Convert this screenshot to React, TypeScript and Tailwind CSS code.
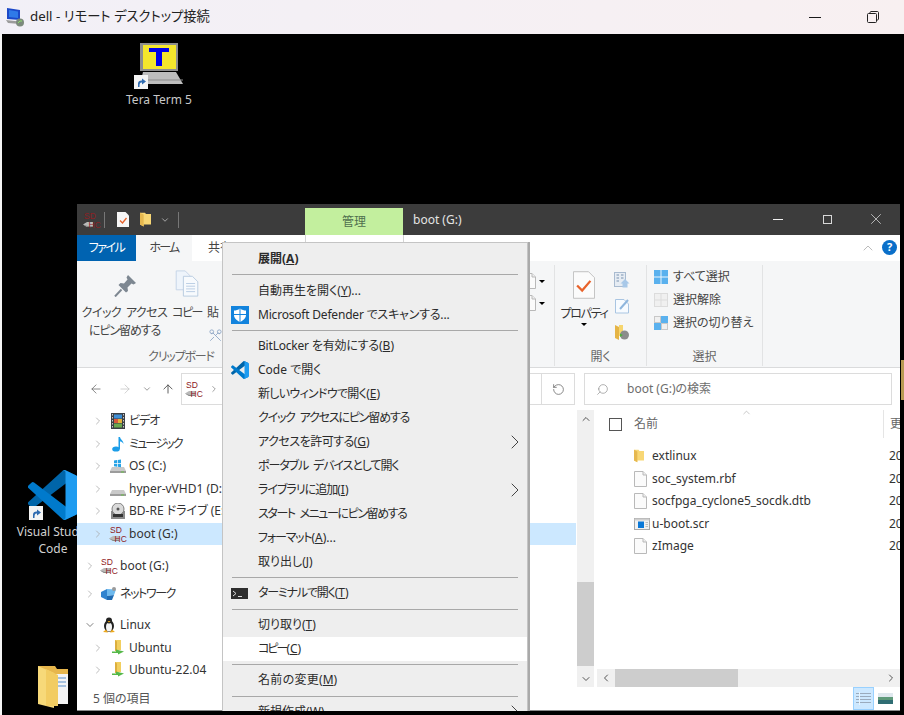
import React from "react";
import { ArrowLeft, ArrowRight, ArrowUp, ChevronDown, ChevronLeft, ChevronRight, ChevronUp, RotateCw, Scissors, Search, X } from "lucide-react";

function VsCodeLogo({ className }: { className: string }) {
  return (
    <svg viewBox="0 0 100 100" className={className}>
      <path fill="#0065A9" d="M96.46 10.8 75.86.87a6.23 6.23 0 0 0-7.1 1.2L1.32 63.56a4.16 4.16 0 0 0 0 6.16l5.51 5.01a4.16 4.16 0 0 0 5.32.24L93.4 13.28c2.73-2.07 6.65-.12 6.65 3.3v-.24a6.25 6.25 0 0 0-3.59-5.54Z" />
      <path fill="#007ACC" d="M96.46 89.2l-20.6 9.92a6.23 6.23 0 0 1-7.1-1.2L1.32 36.44a4.16 4.16 0 0 1 0-6.16l5.51-5.01a4.16 4.16 0 0 1 5.32-.24l81.25 61.68c2.73 2.07 6.65.12 6.65-3.3v.24a6.25 6.25 0 0 1-3.59 5.55Z" />
      <path fill="#1F9CF0" d="M75.86 99.13a6.23 6.23 0 0 1-7.1-1.2c2.3 2.3 6.24.67 6.24-2.58V4.65c0-3.25-3.94-4.88-6.24-2.58a6.23 6.23 0 0 1 7.1-1.2l20.6 9.91A6.25 6.25 0 0 1 100 16.33v67.34a6.25 6.25 0 0 1-3.54 5.63l-20.6 9.83Z" />
    </svg>
  );
}

function ShortcutBadge({ className }: { className: string }) {
  return (
    <svg viewBox="0 0 14 14" className={className}>
      <rect width="14" height="14" fill="#f4f4f4" />
      <path d="M4 12V8.5C4 6.5 5.5 5.5 7.5 5.5H8V3.5L12 6.5 8 9.5V7.5H7.5C6 7.5 5.5 8.5 5.5 12Z" fill="#2f6bb0" />
    </svg>
  );
}

function SdIcon({ className }: { className: string }) {
  return (
    <svg viewBox="0 0 18 18" className={className}>
      <path d="M0 13.5 4 11H10V16H4Z" fill="#b9b9b9" />
      <path d="M0 13.5 4 16H10V15H4.5Z" fill="#888" />
      <text x="1" y="8" fontSize="8.5" fontFamily="Liberation Sans" fill="#8e2024">SD</text>
      <text x="5.5" y="16.5" fontSize="8.5" fontFamily="Liberation Sans" fill="#8e2024">HC</text>
    </svg>
  );
}

function FolderIcon({ className }: { className: string }) {
  return (
    <svg viewBox="0 0 12 15" className={className}>
      <path d="M0 0H5.5L6.5 1.5H12V13H4V15L0 13Z" fill="#f8d775" />
      <path d="M0 0 4 2V15L0 13Z" fill="#e6b84f" />
    </svg>
  );
}

function FileIcon() {
  return (
    <svg viewBox="0 0 13 16" className="h-4 w-[13px]">
      <path d="M.5.5H9L12.5 4V15.5H.5Z" fill="#fbfbfb" stroke="#b9b9b9" />
      <path d="M9 .5V4H12.5" fill="#eee" stroke="#b9b9b9" />
    </svg>
  );
}

function ScrIcon() {
  return (
    <svg viewBox="0 0 16 12" className="h-3 w-4">
      <rect x=".5" y=".5" width="15" height="11" fill="#f1f1f1" stroke="#a8a8a8" />
      <rect x=".5" y=".5" width="15" height="2" fill="#cfcfcf" />
      <rect x="4" y="3.5" width="6" height="6.5" fill="#0a78d7" />
      <path d="M11.5 4.5H14M11.5 6.5H14M11.5 8.5H14" stroke="#bdbdbd" />
    </svg>
  );
}

function NavIcon({ kind }: { kind: string }) {
  if (kind === "video")
    return (
      <svg viewBox="0 0 14 16" className="h-4 w-[14px]">
        <rect width="14" height="16" fill="#3b3f45" />
        <rect x="3" y="1.5" width="8" height="4" fill="#3f8fd6" />
        <rect x="3" y="6" width="4" height="4" fill="#d8573c" />
        <rect x="7" y="6" width="4" height="4" fill="#e3b23c" />
        <rect x="3" y="10.5" width="8" height="4" fill="#6aa84f" />
        <path d="M1.5 1v14M12.5 1v14" stroke="#c9c9c9" strokeDasharray="1.5 1.5" />
      </svg>
    );
  if (kind === "music")
    return (
      <svg viewBox="0 0 14 16" className="h-4 w-[14px]">
        <ellipse cx="5" cy="13" rx="3.8" ry="2.6" fill="#1b9de8" />
        <path d="M7.5 13V1H9C9.5 4 12.5 4.5 12.5 8 11.5 6 10 5.5 9 5.5V13Z" fill="#1b9de8" />
      </svg>
    );
  if (kind === "os" || kind === "hdd")
    return (
      <svg viewBox="0 0 16 14" className="h-[14px] w-4">
        <path d="M2 8H14L16 12V14H0V12Z" fill="#c9c9c9" />
        <rect y="12" width="16" height="2" fill="#9c9c9c" />
        <rect x="11" y="12.5" width="3" height="1" fill="#6cc04a" />
        {kind === "os" && <path d="M4 1.5 7 1V4H4ZM7.7.9 11 .4V4H7.7ZM4 4.7H7V7.7L4 7.2ZM7.7 4.7H11V8.2L7.7 7.8Z" fill="#27a3e6" />}
      </svg>
    );
  if (kind === "bd")
    return (
      <svg viewBox="0 0 16 16" className="h-4 w-4">
        <rect x="1" y="8" width="14" height="8" fill="#8a8a8a" />
        <circle cx="8" cy="6" r="6" fill="#d9d9d9" stroke="#7d7d7d" />
        <circle cx="8" cy="6" r="1.5" fill="#555" />
        <rect x="3" y="11" width="10" height="3" fill="#333" />
      </svg>
    );
  if (kind === "net")
    return (
      <svg viewBox="0 0 16 16" className="h-4 w-4">
        <path d="M0 6 6 3V14L0 11Z" fill="#2f83cf" />
        <path d="M6 3 15 3.5 13 9 6 10Z" fill="#6db9ee" />
        <path d="M6 10 13 9 11 14H6Z" fill="#1f6bb3" />
        <circle cx="13" cy="3" r="2" fill="#9a9a9a" />
      </svg>
    );
  if (kind === "linux")
    return (
      <svg viewBox="0 0 14 16" className="h-4 w-[14px]">
        <ellipse cx="7" cy="9" rx="5" ry="6" fill="#222" />
        <ellipse cx="7" cy="10" rx="3" ry="4.5" fill="#f5f5f5" />
        <circle cx="7" cy="3.5" r="3" fill="#222" />
        <path d="M5.5 4H8.5L7 5.5Z" fill="#eea91c" />
        <path d="M1 15 4 12.5 6 15.5ZM13 15 10 12.5 8 15.5Z" fill="#eea91c" />
      </svg>
    );
  return (
    <svg viewBox="0 0 14 16" className="h-4 w-[14px]">
      <path d="M4 0H10V10H4Z" fill="#f2cf5f" />
      <path d="M4 0 6 1.5V11H4Z" fill="#dcae3e" />
      <path d="M1 11.5H5V9.5L13 11.5 7 14.5V13H1Z" fill="#55b848" />
    </svg>
  );
}

function Acc({ k }: { k: string }) {
  return (
    <span>
      (<span className="underline">{k}</span>)
    </span>
  );
}

const navRows = [
  { label: "ビデオ", icon: "video", d: 1, track: "tracking-[-1px]" },
  { label: "ミュージック", icon: "music", d: 1, track: "tracking-[-1.8px]" },
  { label: "OS (C:)", icon: "os", d: 1 },
  { label: "hyper-vVHD1 (D:)", icon: "hdd", d: 1 },
  { label: "BD-RE ドライブ (E:)", icon: "bd", d: 1 },
  { label: "boot (G:)", icon: "sd", d: 1, selected: true },
];

function NavRow({ label, icon, d, selected, open, cls, track }: { label: string; icon: string; d: number; selected?: boolean; open?: boolean; cls?: string; track?: string }) {
  return (
    <div className={`flex h-[22.5px] shrink-0 items-center ${selected ? "bg-[#cce8ff]" : ""} ${cls ?? ""}`}>
      <span className={d ? "ml-[15px] w-[17px]" : "ml-[7px] w-[16px]"}>
        {open ? <ChevronDown size={12} strokeWidth={1.5} className="text-[#555]" /> : <ChevronRight size={12} strokeWidth={1.5} className="text-[#a6a6a6]" />}
      </span>
      <span className="flex w-[18px] justify-center">
        {icon === "sd" ? <SdIcon className="h-[18px] w-[18px]" /> : <NavIcon kind={icon} />}
      </span>
      <span className={`ml-[2px] whitespace-nowrap ${track ?? ""}`}>{label}</span>
    </div>
  );
}

function MenuRow({ label, k, tail, icon, arrow, bold, hi, track }: { label: string; k?: string; tail?: string; icon?: React.ReactNode; arrow?: boolean; bold?: boolean; hi?: boolean; track?: string }) {
  return (
    <div className={`flex h-6 items-center overflow-hidden ${hi ? "bg-white" : ""} ${bold ? "font-bold" : ""}`}>
      <span className="ml-[8px] flex w-[27px] items-center">{icon}</span>
      <span className="flex-1 whitespace-nowrap">
        <span className={track ?? ""}>{label}</span>
        {k && <Acc k={k} />}
        {tail}
      </span>
      {arrow && <ChevronRight size={24} strokeWidth={1} className="text-[#444]" />}
    </div>
  );
}

function MenuSep({ h, pt }: { h: string; pt: string }) {
  return (
    <div className={`${h} ${pt} ml-[9px] mr-[9px]`}>
      <div className="h-px bg-[#a8a8a8]" />
    </div>
  );
}

function ContextMenu() {
  return (
    <div className="absolute left-[145px] top-[38px] h-[480px] w-[306px] border border-b-0 border-[#c4c4c4] bg-[#eeeeee] pt-[4px] text-[12px] text-[#2b2b2b] shadow-[2px_0_0_#a9a9a9]">
      <MenuRow label="展開" k="A" bold />
      <MenuSep h="h-[8px]" pt="pt-[3px]" />
      <MenuRow label="自動再生を開く" k="Y" tail="..." />
      <MenuRow
        label="Microsoft Defender でスキャンする..."
        track="tracking-[-0.2px]"
        icon={
          <svg viewBox="0 0 18 18" className="h-[18px] w-[18px]">
            <rect width="18" height="18" fill="#1283dd" />
            <path d="M9 2.5C11 4 13 4.5 15 4.5V9C15 12.5 12 14.5 9 16 6 14.5 3 12.5 3 9V4.5C5 4.5 7 4 9 2.5Z" fill="#fff" />
            <path d="M9 2.5V16M3 8.5H15" stroke="#1283dd" />
          </svg>
        }
      />
      <MenuSep h="h-[7px]" pt="pt-[3px]" />
      <MenuRow label="BitLocker を有効にする" k="B" track="tracking-[-0.2px]" />
      <MenuRow label="Code で開く" icon={<VsCodeLogo className="h-[18px] w-[18px]" />} />
      <MenuRow label="新しいウィンドウで開く" k="E" track="tracking-[-0.7px]" />
      <MenuRow label="クイック アクセスにピン留めする" track="tracking-[-1.2px] [word-spacing:3px]" />
      <MenuRow label="アクセスを許可する" k="G" arrow track="tracking-[-0.5px]" />
      <MenuRow label="ポータブル デバイスとして開く" track="tracking-[-1.1px] [word-spacing:3px]" />
      <MenuRow label="ライブラリに追加" k="I" arrow track="tracking-[-1px]" />
      <MenuRow label="スタート メニューにピン留めする" track="tracking-[-1.4px] [word-spacing:3px]" />
      <MenuRow label="フォーマット" k="A" tail="..." track="tracking-[-1.2px]" />
      <MenuRow label="取り出し" k="J" />
      <MenuSep h="h-[7px]" pt="pt-[3px]" />
      <MenuRow
        label="ターミナルで開く"
        k="T"
        track="tracking-[-1.2px]"
        icon={
          <svg viewBox="0 0 17 11" className="h-[11px] w-[17px]">
            <rect width="17" height="11" fill="#2e2e2e" />
            <path d="M2 3 5 5.5 2 8" stroke="#ddd" fill="none" />
            <path d="M7 8.5H11" stroke="#ddd" />
          </svg>
        }
      />
      <MenuSep h="h-[8px]" pt="pt-[4px]" />
      <MenuRow label="切り取り" k="T" />
      <MenuRow label="コピー" k="C" hi track="tracking-[-2px]" />
      <MenuSep h="h-[7px]" pt="pt-[3px]" />
      <MenuRow label="名前の変更" k="M" track="tracking-[0.3px]" />
      <MenuSep h="h-[8px]" pt="pt-[4px]" />
      <MenuRow label="新規作成" k="W" arrow />
    </div>
  );
}

function TitleBarDoc() {
  return (
    <svg viewBox="0 0 12 15" className="h-[15px] w-3">
      <path d="M0 0H8.5L12 3.5V15H0Z" fill="#f6f6f6" />
      <path d="M3 8.5 5.5 11 9.5 6" stroke="#e8622a" strokeWidth="1.3" fill="none" />
    </svg>
  );
}

function Ribbon() {
  return (
    <div className="flex h-[107px] border-b border-[#dadbdc] bg-[#f5f6f7] text-[12px] text-[#444]">
      {/* clipboard + hidden groups */}
      <div className="mb-px mt-[4px] flex w-[478px] border-r border-[#e2e3e4]">
        <div className="flex w-[208px] flex-col">
          <div className="flex h-[83px] shrink-0">
            <div className="ml-[7px] flex w-[81px] flex-col items-center text-center leading-[18px]">
              <svg viewBox="0 0 22 22" className="mt-[10px] h-[22px] w-[22px]">
                <path d="M14 0 22 8 19.5 9.5 17.5 8.5 13.5 12.5 14 16 12 17.5 4.5 10 6.5 8 10 8.5 13.5 4.5 12.5 2.5Z" fill="#7d8791" />
                <path d="M7.5 14.5 1 21.5" stroke="#7d8791" strokeWidth="2" />
              </svg>
              <span className="mt-[7px] whitespace-nowrap tracking-[-0.5px] [word-spacing:2px]">クイック アクセス</span>
              <span className="whitespace-nowrap tracking-[-1.1px]">にピン留めする</span>
            </div>
            <div className="ml-[3px] flex w-[38px] flex-col items-center leading-[18px]">
              <svg viewBox="0 0 26 30" className="mt-[5px] h-[27px] w-[24px]">
                <path d="M1 1H11L16 6V22H1Z" fill="#eef4fb" stroke="#c2d3e6" />
                <path d="M9 7H19L25 13V29H9Z" fill="#f7fafd" stroke="#b5c9df" />
                <path d="M12 15H22M12 18H22M12 21H22M12 24H22" stroke="#b6cbe2" />
              </svg>
              <span className="mt-[7px] whitespace-nowrap tracking-[-1.5px]">コピー</span>
            </div>
            <div className="relative ml-[1px] flex flex-col leading-[18px]">
              <span className="mt-[39px]">貼</span>
              <Scissors size={15} strokeWidth={1.4} className="absolute left-[1px] top-[63px] rotate-90 text-[#8ea6c6]" />
            </div>
          </div>
          <div className="text-center leading-[18px] tracking-[-1.2px] text-[#666]">クリップボード</div>
        </div>
        <div className="flex flex-1 flex-col items-end gap-[6px] pr-[9px] pt-[8px]">
          <div className="flex items-center gap-[3px]">
            <FileIcon />
            <span className="h-0 w-0 border-x-[3px] border-t-[3px] border-x-transparent border-t-black" />
          </div>
          <div className="flex items-center gap-[3px]">
            <FileIcon />
            <span className="h-0 w-0 border-x-[3px] border-t-[3px] border-x-transparent border-t-black" />
          </div>
        </div>
      </div>
      {/* open */}
      <div className="mb-px mt-[4px] flex w-[92px] flex-col border-r border-[#e2e3e4]">
        <div className="flex h-[83px] shrink-0">
          <div className="flex w-[58px] flex-col items-center leading-[18px] text-[#333]">
            <svg viewBox="0 0 24 30" className="mt-[6px] h-[28px] w-[22px]">
              <path d="M.5.5H17L23.5 7V29.5H.5Z" fill="#fbfbfb" stroke="#bdbdbd" />
              <path d="M4.5 15.5 10 21 19 10.5" stroke="#e8622a" strokeWidth="2.5" fill="none" />
            </svg>
            <span className="mt-[6px] whitespace-nowrap tracking-[-1.3px]">プロパティ</span>
            <span className="h-0 w-0 border-x-[3px] border-t-[3px] border-x-transparent border-t-black" />
          </div>
          <div className="ml-[1px] flex flex-col gap-[10px] pt-[7px]">
            <svg viewBox="0 0 16 16" className="h-4 w-4">
              <rect x=".5" y=".5" width="11" height="14" fill="#e6ecf3" stroke="#a9bbd0" />
              <path d="M2.5 3H5M2.5 6H5M2.5 9H5M7 3H9.5M7 6H9.5" stroke="#7b93b0" />
              <path d="M11 7 15.5 11.5H13.5V15.5H8.5V11.5H6.5Z" fill="#a8c8e8" />
            </svg>
            <svg viewBox="0 0 16 16" className="h-4 w-4">
              <path d="M1.5 1.5H10L14.5 6V15H1.5Z" fill="#f7fbff" stroke="#a9c5e2" />
              <path d="M6 11 14 2" stroke="#8fb6dd" strokeWidth="2" />
            </svg>
            <svg viewBox="0 0 16 16" className="h-4 w-4">
              <path d="M1 1 5 3V16L1 14Z" fill="#e5b445" />
              <path d="M5 1H9V12H5Z" fill="#f6d56e" />
              <circle cx="10.5" cy="11" r="4.5" fill="#8c8c8c" />
              <path d="M6 9.5 9 11 6 13Z" fill="#4faf3d" />
            </svg>
          </div>
        </div>
        <div className="text-center leading-[18px] text-[#666]">開く</div>
      </div>
      {/* select */}
      <div className="mb-px mt-[4px] flex w-[116px] flex-col border-r border-[#e2e3e4]">
        <div className="flex h-[83px] shrink-0 flex-col gap-[5px] pl-[7px] pt-[3px] leading-[18px] text-[#444]">
          <div className="flex items-center gap-[5px]">
            <svg viewBox="0 0 14 14" className="h-[14px] w-[14px]">
              <rect width="14" height="14" fill="#5ab1ee" />
              <path d="M7 0V14M0 7H14" stroke="#eaf5fd" />
            </svg>
            <span>すべて選択</span>
          </div>
          <div className="flex items-center gap-[5px]">
            <svg viewBox="0 0 14 14" className="h-[14px] w-[14px]">
              <rect x=".5" y=".5" width="13" height="13" fill="#f0f0f0" stroke="#dcdcdc" />
              <path d="M7 0V14M0 7H14" stroke="#dcdcdc" />
            </svg>
            <span>選択解除</span>
          </div>
          <div className="flex items-center gap-[5px]">
            <svg viewBox="0 0 14 14" className="h-[14px] w-[14px]">
              <rect x="7" width="7" height="7" fill="#5ab1ee" />
              <rect y="7" width="7" height="7" fill="#5ab1ee" />
              <rect x=".5" y=".5" width="6" height="6" fill="#f0f0f0" stroke="#c8c8c8" />
              <rect x="7.5" y="7.5" width="6" height="6" fill="#f0f0f0" stroke="#c8c8c8" />
            </svg>
            <span>選択の切り替え</span>
          </div>
        </div>
        <div className="text-center leading-[18px] text-[#666]">選択</div>
      </div>
    </div>
  );
}

function NavBar() {
  return (
    <div className="flex h-[42px] items-start bg-white pt-[5px] text-[12px]">
      <div className="flex h-8 w-[104px] items-center text-[#666]">
        <ArrowLeft size={14} strokeWidth={1.3} className="ml-[12px]" />
        <ArrowRight size={14} strokeWidth={1.3} className="ml-[15px] text-[#c4c4c4]" />
        <ChevronDown size={10} strokeWidth={1.6} className="ml-[10px]" />
        <ArrowUp size={14} strokeWidth={1.6} className="ml-[9px] text-[#555]" />
      </div>
      <div className="flex h-8 w-[361px] items-center border border-[#dcdcdc] pl-[3px]">
        <SdIcon className="h-[18px] w-[18px]" />
        <ChevronRight size={10} strokeWidth={1.5} className="ml-[6px] text-[#666]" />
      </div>
      <div className="flex h-8 w-[33px] items-center justify-center border border-l-0 border-[#dcdcdc]">
        <RotateCw size={13} strokeWidth={1.4} className="-scale-x-100 text-[#666]" />
      </div>
      <div className="ml-[9px] flex h-8 w-[308px] items-center border border-[#dcdcdc] pl-[11px] text-[#6d6d6d]">
        <Search size={13} strokeWidth={1.2} className="-scale-x-100 text-[#888]" />
        <span className="ml-[18px]">boot (G:)の検索</span>
      </div>
    </div>
  );
}

function FileRow({ icon, name }: { icon: React.ReactNode; name: string }) {
  return (
    <div className="flex h-[22.5px] items-center">
      <span className="ml-[37px] flex w-[18px] justify-start">{icon}</span>
      <span className="whitespace-nowrap">{name}</span>
      <span className="absolute left-[292px]">20</span>
    </div>
  );
}

function Explorer() {
  return (
    <div className="absolute left-[75px] top-[170px] flex h-[507px] w-[823px] flex-col overflow-hidden bg-white">
      {/* title bar */}
      <div className="flex h-[31px] items-end bg-[#3c3c3c] text-[12px]">
        <div className="flex h-[31px] w-[228px] items-center pl-[6px]">
          <SdIcon className="h-[18px] w-[18px]" />
          <span className="ml-[3px] h-4 w-px bg-[#777]" />
          <span className="ml-[12px]"><TitleBarDoc /></span>
          <span className="ml-[11px]"><FolderIcon className="h-[15px] w-[11px]" /></span>
          <ChevronDown size={10} strokeWidth={2} className="ml-[9px] text-[#bbb]" />
          <span className="ml-[8px] h-4 w-px bg-[#777]" />
        </div>
        <div className="flex h-[27px] w-[98px] items-center justify-center bg-[#c3ef9e] text-[#50704f]">管理</div>
        <div className="flex h-[31px] flex-1 items-center pl-[10px] text-[#e4e4e4]">boot (G:)</div>
        <div className="flex h-[31px] items-center pb-[1px] pr-[15px] text-[#f0f0f0]">
          <span className="h-px w-[10px] bg-[#f0f0f0]" />
          <span className="ml-[40px] h-[9px] w-[9px] border border-[#d8d8d8]" />
          <X size={18} strokeWidth={0.9} className="ml-[35px]" />
        </div>
      </div>
      {/* tabs */}
      <div className="flex h-[26px] items-stretch text-[12px] text-[#444]">
        <div className="flex w-[59px] items-center justify-center bg-[#0063b1] tracking-[-1.5px] text-white">ファイル</div>
        <div className="flex w-[56px] items-center justify-center bg-[#f5f6f7] tracking-[-1.8px]">ホーム</div>
        <div className="flex w-[56px] items-center justify-center">共有</div>
        <div className="w-[57px]" />
        <div className="h-[7px] w-[99px] border-x border-[#d4d4d4]" />
        <div className="flex-1" />
        <ChevronUp size={16} strokeWidth={1} className="mr-[6px] mt-[5px] text-[#999]" />
        <div className="mr-[3px] mt-[5px] flex h-[15px] w-[15px] items-center justify-center rounded-full bg-[#0a6fc9] text-[11px] font-bold text-white">?</div>
      </div>
      <Ribbon />
      <NavBar />
      {/* body */}
      <div className="relative flex min-h-0 flex-1 text-[12px] text-[#333]">
        <div className="w-[499px] pt-0">
          {navRows.map((r) => (
            <NavRow key={r.label} {...r} />
          ))}
          <NavRow label="boot (G:)" icon="sd" d={0} cls="mt-[10px]" />
          <NavRow label="ネットワーク" icon="net" d={0} cls="mt-[5px]" track="tracking-[-1.4px]" />
          <NavRow label="Linux" icon="linux" d={0} open cls="mt-[9px]" />
          <NavRow label="Ubuntu" icon="ubuntu" d={1} />
          <NavRow label="Ubuntu-22.04" icon="ubuntu" d={1} />
        </div>
        <div className="ml-px flex w-[17px] flex-col bg-[#f0f0f0] text-[#555]">
          <div className="flex h-[17px] items-center justify-center"><ChevronUp size={12} strokeWidth={2} /></div>
          <div className="h-[155px]" />
          <div className="h-[84px] bg-[#cdcdcd]" />
          <div className="flex-1" />
          <div className="flex h-[17px] items-center justify-center"><ChevronDown size={12} strokeWidth={2} /></div>
        </div>
        <div className="relative ml-[3px] flex min-w-0 flex-1 flex-col overflow-hidden">
          <div className="relative flex h-[28px] items-center">
            <span className="ml-[12px] h-[13px] w-[13px] border border-[#555]" />
            <span className="ml-[12px] text-[#666]">名前</span>
            <ChevronUp size={11} strokeWidth={1} className="absolute left-[144px] top-[-3px] text-[#888]" />
            <span className="absolute left-[286px] top-0 h-[28px] w-px bg-[#e5e5e5]" />
            <span className="absolute left-[293px] whitespace-nowrap text-[#666]">更新日時</span>
          </div>
          <div className="relative flex-1 pt-[7px]">
            <FileRow icon={<FolderIcon className="h-[14px] w-[10px]" />} name="extlinux" />
            <FileRow icon={<FileIcon />} name="soc_system.rbf" />
            <FileRow icon={<FileIcon />} name="socfpga_cyclone5_socdk.dtb" />
            <FileRow icon={<ScrIcon />} name="u-boot.scr" />
            <FileRow icon={<FileIcon />} name="zImage" />
          </div>
          <div className="flex h-[18px] items-center bg-[#f0f0f0] text-[#555]">
            <div className="flex w-[18px] justify-center"><ChevronLeft size={12} strokeWidth={2} /></div>
            <div className="h-full w-[123px] bg-[#cdcdcd]" />
            <div className="flex-1" />
            <div className="flex w-[18px] justify-center"><ChevronRight size={12} strokeWidth={2} /></div>
          </div>
        </div>
      </div>
      {/* status bar */}
      <div className="flex h-[23px] items-center text-[12px] text-[#555]">
        <span className="ml-[16px]">5 個の項目</span>
        <span className="flex-1" />
        <span className="flex h-[23px] w-[21px] items-center justify-center border border-[#99d1ff] bg-[#cce8ff]">
          <svg viewBox="0 0 15 13" className="h-[13px] w-[15px]">
            <path d="M0 1.5H15M0 4.5H15M0 7.5H15M0 10.5H15" stroke="#9aabbd" />
            <path d="M3.5 0V13" stroke="#eaf5fd" />
          </svg>
        </span>
        <span className="ml-[4px] mr-[7px]">
          <svg viewBox="0 0 15 11" className="h-[11px] w-[15px]">
            <rect width="15" height="11" fill="#dfe8ee" />
            <rect y="4" width="15" height="4" fill="#5f9a7a" />
            <rect y="7" width="15" height="4" fill="#2f6d73" />
          </svg>
        </span>
      </div>
      <div className="h-px bg-[#8a8a8a]" />
      <ContextMenu />
    </div>
  );
}

export default function App() {
  return (
    <div className="flex h-[715px] w-[904px] flex-col overflow-hidden bg-black [font-family:'Noto_Sans','Noto_Sans_CJK_JP',sans-serif] [font-feature-settings:'palt']">
      {/* remote desktop title bar */}
      <div className="flex h-[34px] shrink-0 items-center bg-gradient-to-r from-[#f2f0f7] to-[#f8f0f1]">
        <svg viewBox="0 0 20 20" className="ml-[5px] h-5 w-5">
          <path d="M2 1 15 3V13L2 12Z" fill="#1c48c8" />
          <path d="M4 3 13 4.5V11L4 10Z" fill="#2f7ae8" />
          <path d="M1 13 14 14.5 15 17 3 16Z" fill="#9b9b9b" />
          <circle cx="15" cy="15.5" r="4" fill="#7c8a7c" />
          <path d="M13 16 15 14 17 14" stroke="#8ee06a" fill="none" />
        </svg>
        <span className="ml-[5px] whitespace-nowrap text-[13.3px] text-[#222]">dell - リモート デスクトップ接続</span>
        <span className="flex-1" />
        <span className="h-px w-3 bg-[#1a1a1a]" />
        <svg viewBox="0 0 12 12" className="ml-[46px] mr-[25px] h-3 w-3">
          <rect x=".5" y="2.5" width="9" height="9" rx="1" fill="none" stroke="#222" />
          <path d="M3 2V1.5C3 1 3.5 .5 4 .5H10.5C11 .5 11.5 1 11.5 1.5V8C11.5 8.5 11 9 10.5 9H10" fill="none" stroke="#222" />
        </svg>
      </div>
      {/* desktop */}
      <div className="relative flex-1 border-l-2 border-[#f5f5f5] bg-black">
        <div className="absolute left-[138px] top-[9px]">
          <svg viewBox="0 0 44 41" className="h-[41px] w-[44px]">
            <rect width="38" height="28" fill="#8e8e8e" />
            <rect x="3" y="2" width="33" height="24" fill="#f4e62c" />
            <rect x="9" y="5" width="20" height="4" fill="#0000e8" />
            <rect x="16" y="9" width="6" height="14" fill="#0000e8" />
            <path d="M3 29H36L43 41H0Z" fill="#bdbdbd" />
            <path d="M3 37H43" stroke="#8a8a8a" />
          </svg>
        </div>
        <ShortcutBadge className="absolute left-[132px] top-[41px] h-[14px] w-[14px]" />
        <div className="absolute left-[107px] top-[57px] w-[100px] text-center text-[12px] text-[#c8c8c8]">Tera Term 5</div>

        <VsCodeLogo className="absolute left-[26px] top-[436px] h-[50px] w-[50px]" />
        <ShortcutBadge className="absolute left-[27px] top-[472px] h-[14px] w-[14px]" />
        <div className="absolute left-[0px] top-[489px] w-[102px] text-center text-[12px] leading-[17px] text-[#d0d0d0]">
          Visual Studio
          <br />
          Code
        </div>

        <svg viewBox="0 0 32 42" className="absolute left-[36px] top-[632px] h-[42px] w-[32px]">
          <path d="M0 0H17L19 3H30V38H0Z" fill="#e7b64c" />
          <path d="M18 8H30V38H18Z" fill="#f4f4f4" />
          <path d="M20 12H28M20 16H28M20 20H28" stroke="#5b8fc9" />
          <path d="M0 0 16 7V42L0 38Z" fill="#f7d979" />
          <path d="M8 3 20 9V40H8Z" fill="#f2cc62" />
        </svg>

        <Explorer />
        <div className="absolute right-0 top-[326px] h-[40px] w-[3px] bg-[#b89a52]" />
      </div>
    </div>
  );
}
